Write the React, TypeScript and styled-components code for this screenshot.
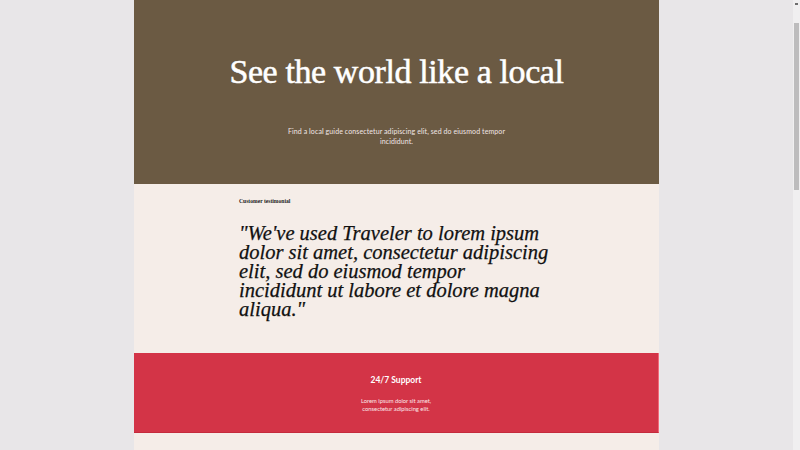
import React from "react";
import styled, { createGlobalStyle } from "styled-components";

const Global = createGlobalStyle`
  html, body { margin: 0; padding: 0; }
  html { scrollbar-width: none; }
  ::-webkit-scrollbar { display: none; }
  body {
    background: #e8e6e8;
    font-family: Lato, "Open Sans", "Liberation Sans", sans-serif;
    padding-right: 7px;
  }
`;

const Page = styled.main`
  width: 525px;
  margin: 0 auto;
  display: flex;
  flex-direction: column;
`;

const Hero = styled.header`
  background: #6b5a43;
  height: 184px;
  box-sizing: border-box;
  padding-top: 49px;
  display: flex;
  flex-direction: column;
  align-items: center;
`;

const Title = styled.h1`
  margin: 0;
  color: #ffffff;
  font-family: "Liberation Serif", "DejaVu Serif", serif;
  font-weight: 400;
  font-size: 34px;
  line-height: 46px;
  letter-spacing: -0.4px;
  -webkit-text-stroke: 0.5px #ffffff;
`;

const Lead = styled.p`
  margin: 31px 0 0;
  width: 222px;
  text-align: center;
  color: #f1e6e6;
  font-size: 7px;
  line-height: 10px;
  letter-spacing: 0.1px;
`;

const Testimonial = styled.section`
  background: #f5ede8;
  height: 169px;
  box-sizing: border-box;
  padding: 12px 0 0 105px;
  display: flex;
  flex-direction: column;
`;

const Label = styled.div`
  font-family: "Liberation Serif", serif;
  font-size: 5.6px;
  line-height: 10px;
  color: #1a1a1a;
  font-weight: 700;
`;

const Quote = styled.blockquote`
  margin: 18px 0 0;
  width: 313px;
  font-family: "Liberation Serif", "DejaVu Serif", serif;
  font-style: italic;
  font-size: 20.5px;
  line-height: 19px;
  color: #111111;
  -webkit-text-stroke: 0.25px #111111;
`;

const Feature = styled.section`
  background: #d33447;
  height: 80px;
  box-sizing: border-box;
  padding-top: 21px;
  display: flex;
  flex-direction: column;
  align-items: center;
  border-right: 1px solid #f06a7a;
  border-bottom: 1px solid #c42a3c;
`;

const FeatureTitle = styled.h3`
  margin: 0;
  color: #ffffff;
  font-size: 8.5px;
  line-height: 12px;
  font-weight: 700;
`;

const FeatureText = styled.p`
  margin: 11px 0 0;
  color: #fbe7e9;
  font-size: 5.8px;
  line-height: 8px;
  text-align: center;
`;

const Rest = styled.section`
  background: #f5ede8;
  height: 740px;
`;

const ScrollTrack = styled.div`
  position: fixed;
  top: 0;
  right: 0;
  width: 7px;
  height: 100vh;
  background: #f0eff0;
`;

const ScrollArrow = styled.div`
  position: absolute;
  top: 3px;
  left: 2px;
  width: 3px;
  height: 2px;
  background: #6e6e6e;
`;

const ScrollThumb = styled.div`
  position: absolute;
  top: 23px;
  left: 1px;
  width: 5px;
  height: 167px;
  background: #bdbcbd;
`;

export default function App() {
  return (
    <>
      <Global />
      <Page>
        <Hero>
          <Title>See the world like a local</Title>
          <Lead>
            Find a local guide consectetur adipiscing elit, sed do eiusmod tempor incididunt.
          </Lead>
        </Hero>
        <Testimonial>
          <Label>Customer testimonial</Label>
          <Quote>
            "We've used Traveler to lorem ipsum dolor sit amet, consectetur adipiscing elit, sed do eiusmod tempor incididunt ut labore et dolore magna aliqua."
          </Quote>
        </Testimonial>
        <Feature>
          <FeatureTitle>24/7 Support</FeatureTitle>
          <FeatureText>
            Lorem ipsum dolor sit amet,
            <br />
            consectetur adipiscing elit.
          </FeatureText>
        </Feature>
        <Rest />
      </Page>
      <ScrollTrack>
        <ScrollArrow />
        <ScrollThumb />
      </ScrollTrack>
    </>
  );
}
